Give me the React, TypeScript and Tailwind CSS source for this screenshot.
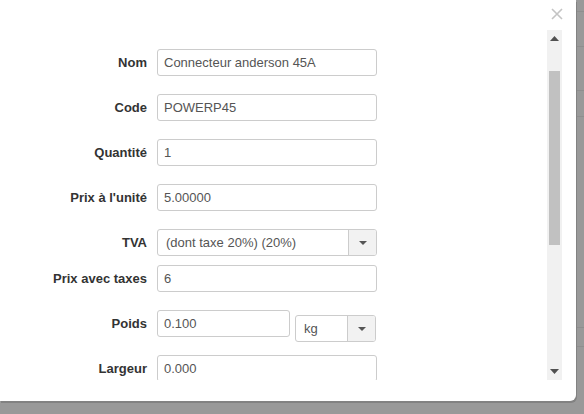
import React from 'react';

type Field = {
  label: string;
  value: string;
  kind?: 'input' | 'select' | 'weight';
  unit?: string;
  tight?: boolean;
};

const fields: Field[] = [
  { label: 'Nom', value: 'Connecteur anderson 45A' },
  { label: 'Code', value: 'POWERP45' },
  { label: 'Quantité', value: '1' },
  { label: "Prix à l'unité", value: '5.00000' },
  { label: 'TVA', value: '(dont taxe 20%) (20%)', kind: 'select' },
  { label: 'Prix avec taxes', value: '6', tight: true },
  { label: 'Poids', value: '0.100', kind: 'weight', unit: 'kg' },
  { label: 'Largeur', value: '0.000' },
];

function Caret() {
  return (
    <svg width="8" height="4" viewBox="0 0 8 4" className="block">
      <path d="M0 0h8L4 4z" fill="#555" />
    </svg>
  );
}

function SelectBox({ value, className }: { value: string; className: string }) {
  return (
    <div className={`flex h-[27px] shrink-0 overflow-hidden rounded-[3px] border border-[#ccc] bg-white ${className}`}>
      <div className="flex flex-1 items-center px-[8px] text-[13px] text-[#555]">{value}</div>
      <div className="flex w-[28px] items-center justify-center border-l border-[#ccc] bg-[#f2f2f2]">
        <Caret />
      </div>
    </div>
  );
}

function TextBox({ value, className }: { value: string; className: string }) {
  return (
    <div className={`flex h-[27px] shrink-0 items-center rounded-[3px] border border-[#ccc] bg-white px-[6px] text-[13px] text-[#555] ${className}`}>
      {value}
    </div>
  );
}

function FormRow({ field }: { field: Field }) {
  return (
    <div className={`flex h-[27px] items-start ${field.tight ? 'mt-[9px]' : 'mt-[18px]'} first:mt-0`}>
      <label className="flex h-[27px] w-[147px] shrink-0 items-center justify-end text-[13px] font-bold text-[#333]">
        {field.label}
      </label>
      <div className="ml-[10px] flex h-[27px] items-start">
        {field.kind === 'select' && <SelectBox value={field.value} className="w-[220px]" />}
        {field.kind === 'weight' && (
          <>
            <TextBox value={field.value} className="w-[133px]" />
            {/* unit picker sits a few px lower than the value box */}
            <SelectBox value={field.unit ?? ''} className="ml-[5px] mt-[5px] w-[81px]" />
          </>
        )}
        {!field.kind && <TextBox value={field.value} className="w-[220px]" />}
      </div>
    </div>
  );
}

function Scrollbar() {
  return (
    <div className="flex h-[350px] w-[15px] shrink-0 flex-col items-center bg-[#f1f1f1]">
      <div className="flex h-[15px] items-center justify-center pt-[2px]">
        <svg width="9" height="5" viewBox="0 0 9 5">
          <path d="M0 5h9L4.5 0z" fill="#505050" />
        </svg>
      </div>
      <div className="mt-[26px] h-[174px] w-[11px] bg-[#c1c1c1]" />
      <div className="flex-1" />
      <div className="flex h-[15px] items-center justify-center pb-[2px]">
        <svg width="9" height="5" viewBox="0 0 9 5">
          <path d="M0 0h9L4.5 5z" fill="#505050" />
        </svg>
      </div>
    </div>
  );
}

export default function App() {
  return (
    <div className="relative h-[414px] w-[584px] overflow-hidden bg-[#999]" style={{ fontFamily: '"Liberation Sans", Arial, sans-serif' }}>
      {/* table rows behind the backdrop */}
      <div className="flex flex-col">
        <div className="h-[12px] border-b border-[#8e8e8e]" />
        <div className="h-[35px] border-b border-[#8e8e8e]" />
        <div className="h-[44px] border-b border-[#8e8e8e]" />
        <div className="h-[26px] border-b border-[#8e8e8e]" />
        <div className="h-[211px] border-b border-[#8e8e8e]" />
        <div className="h-[19px] border-b border-[#8e8e8e]" />
      </div>

      <div className="absolute left-0 top-0 flex h-[401px] w-[576px] flex-col rounded-br-[6px] bg-white shadow-[1px_2px_0_#828282]">
        <div className="flex h-[30px] justify-end pr-[13px] pt-[8px]">
          <svg width="12" height="12" viewBox="0 0 12 12">
            <path d="M1 1l10 10M11 1L1 11" stroke="#c4c4c4" strokeWidth="1.6" />
          </svg>
        </div>
        <div className="flex pr-[14px]">
          <div className="h-[350px] flex-1 overflow-hidden pt-[19px]">
            {fields.map(f => (
              <FormRow key={f.label} field={f} />
            ))}
          </div>
          <Scrollbar />
        </div>
      </div>
    </div>
  );
}
